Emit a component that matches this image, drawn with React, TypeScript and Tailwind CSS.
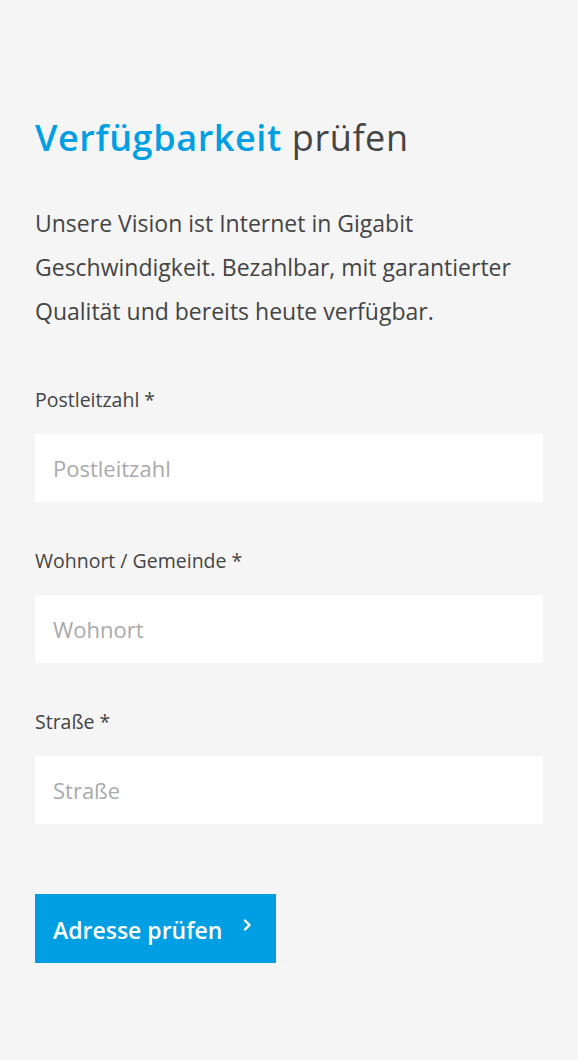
import React from 'react';

const fields = [
  { label: 'Postleitzahl *', placeholder: 'Postleitzahl' },
  { label: 'Wohnort / Gemeinde *', placeholder: 'Wohnort' },
  { label: 'Straße *', placeholder: 'Straße' },
];

const App: React.FC = () => {
  return (
    <div className="min-h-[1060px] bg-[#f5f5f5] px-[35px] pt-[114px] font-['Open_Sans',sans-serif]">
      <h1 className="text-[36px] leading-[48px] tracking-[0.6px] text-[#444]">
        <span className="font-semibold text-[#009fe3]">Verfügbarkeit</span> prüfen
      </h1>

      <p className="mt-[39px] text-[23px] leading-[44px] text-[#444]">
        Unsere Vision ist Internet in Gigabit Geschwindigkeit. Bezahlbar, mit garantierter Qualität und bereits heute verfügbar.
      </p>

      <form className="mt-[54px] flex flex-col" onSubmit={(e) => e.preventDefault()}>
        {fields.map((f, i) => (
          <div key={f.label} className={i > 0 ? 'mt-[46px]' : ''}>
            <label className="block text-[19.5px] leading-[26px] text-[#444]">{f.label}</label>
            <input
              type="text"
              placeholder={f.placeholder}
              className="mt-[21px] block h-[68px] w-full bg-white px-[18px] text-[22px] text-[#444] outline-none placeholder:text-[#aaa]"
            />
          </div>
        ))}

        <button
          type="submit"
          className="mt-[70px] flex h-[69px] w-[241px] items-center bg-[#009fe3] pl-[18px] pt-[4px] text-[23px] font-semibold text-white"
        >
          Adresse prüfen
          <svg className="ml-[18px] mb-[12px] h-[14px] w-[14px]" viewBox="0 0 14 14" fill="none" stroke="currentColor" strokeWidth={2.4} strokeLinecap="round" strokeLinejoin="round">
            <path d="M5 2.5l4.5 4.5L5 11.5" />
          </svg>
        </button>
      </form>
    </div>
  );
};

export default App;
